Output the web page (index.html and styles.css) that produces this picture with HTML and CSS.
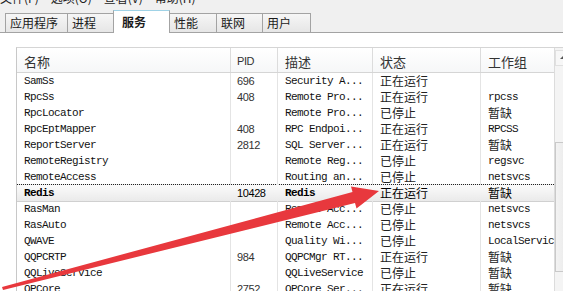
FILE: index.html
```html
<!DOCTYPE html>
<html lang="zh-CN">
<head>
    <meta charset="UTF-8">
    <title>Windows 任务管理器 - 服务</title>
    <link rel="stylesheet" href="styles.css">
</head>
<body>
    <div class="window">
        <div class="menu"><span>文件(F)</span><span>选项(O)</span><span>查看(V)</span><span>帮助(H)</span></div>

        <div class="tabs">
            <div class="tab w62">应用程序</div>
            <div class="tab w46">进程</div>
            <div class="tab active">服务</div>
            <div class="tab w47">性能</div>
            <div class="tab w46">联网</div>
            <div class="tab w49">用户</div>
        </div>

        <div class="panel">
            <div class="list">
                <div class="rows">
                    <div class="row head">
                        <div class="cell cn">名称</div>
                        <div class="cell num">PID</div>
                        <div class="cell cn">描述</div>
                        <div class="cell cn">状态</div>
                        <div class="cell cn">工作组</div>
                    </div>
                    <div id="body"></div>
                </div>
                <div class="scrollbar">
                    <div class="sb-btn up"></div>
                    <div class="sb-track"><div class="sb-thumb"></div></div>
                    <div class="sb-btn down"></div>
                </div>
            </div>
        </div>

        <svg class="arrow" width="563" height="291" viewBox="0 0 563 291">
            <polygon points="379,191 351,186.5 352.5,192 2,287 3,290 355,203 356.5,208.5" fill="#e8383d"/>
        </svg>
    </div>

    <script>
        const services = [
            ['SamSs', '696', 'Security A...', '正在运行', ''],
            ['RpcSs', '408', 'Remote Pro...', '正在运行', 'rpcss'],
            ['RpcLocator', '', 'Remote Pro...', '已停止', '暂缺'],
            ['RpcEptMapper', '408', 'RPC Endpoi...', '正在运行', 'RPCSS'],
            ['ReportServer', '2812', 'SQL Server...', '正在运行', '暂缺'],
            ['RemoteRegistry', '', 'Remote Reg...', '已停止', 'regsvc'],
            ['RemoteAccess', '', 'Routing an...', '已停止', 'netsvcs'],
            ['Redis', '10428', 'Redis', '正在运行', '暂缺'],
            ['RasMan', '', 'Remote Acc...', '已停止', 'netsvcs'],
            ['RasAuto', '', 'Remote Acc...', '已停止', 'netsvcs'],
            ['QWAVE', '', 'Quality Wi...', '已停止', 'LocalServic'],
            ['QQPCRTP', '984', 'QQPCMgr RT...', '正在运行', '暂缺'],
            ['QQLiveService', '', 'QQLiveService', '已停止', '暂缺'],
            ['QPCore', '2752', 'QPCore Ser...', '正在运行', '暂缺']
        ];

        function isChinese(text) {
            return /[\u4e00-\u9fff]/.test(text);
        }

        function renderRows() {
            const body = document.getElementById('body');
            services.forEach(s => {
                const row = document.createElement('div');
                row.className = 'row' + (s[0] === 'Redis' ? ' selected' : '');
                row.innerHTML = `<div class="cell mono">${s[0]}</div>
                                 <div class="cell num">${s[1]}</div>
                                 <div class="cell mono">${s[2]}</div>
                                 <div class="cell cn">${s[3]}</div>
                                 <div class="cell ${isChinese(s[4]) ? 'cn' : 'mono'}">${s[4]}</div>`;
                body.appendChild(row);
            });
        }

        renderRows();
    </script>
</body>
</html>
```

FILE: styles.css
```css
body {
    margin: 0;
    background: #f0f0f0;
    font-family: "Noto Sans CJK SC", sans-serif;
}

.window {
    position: relative;
    width: 563px;
    height: 291px;
    overflow: hidden;
    background: #f0f0f0;
}

.menu {
    display: flex;
    height: 10px;
    overflow: hidden;
    font-size: 12px;
    color: #222;
}

.menu span {
    line-height: 12px;
    margin-top: -8px;
    margin-right: 12px;
}

.tabs {
    display: flex;
    align-items: flex-end;
    height: 22px;
    padding-left: 5px;
}

.tab {
    box-sizing: border-box;
    height: 19px;
    margin-right: -1px;
    border: 1px solid #a3a3a3;
    border-bottom: none;
    background: linear-gradient(#f6f6f6, #e6e6e6);
    font-size: 12px;
    line-height: 18px;
    padding-left: 4px;
    color: #1a1a1a;
}

.w62 { width: 63px; }
.w46 { width: 47px; }
.w47 { width: 48px; }
.w49 { width: 49px; }

.tab.active {
    position: relative;
    z-index: 1;
    width: 57px;
    height: 23px;
    margin-bottom: -1px;
    background: #fff;
    border-color: #a3a3a3;
    border-top: 1px solid #9fd2e6;
    font-weight: bold;
    padding-left: 8px;
    line-height: 21px;
}

.panel {
    height: 259px;
    background: #fff;
    border-top: 1px solid #a3a3a3;
    padding: 14px 0 0 16px;
}

.list {
    display: flex;
    width: 560px;
    height: 260px;
    border-top: 1px solid #d5d5d5;
    border-left: 1px solid #c8c8c8;
}

.rows {
    width: 537px;
}

.row {
    display: grid;
    grid-template-columns: 214px 47px 95px 108px 73px;
    height: 16px;
    box-sizing: border-box;
}

.row.head {
    height: 25px;
    background: linear-gradient(#ffffff, #f6f7f8);
    border-bottom: 1px solid #d5d5d5;
}

.head .cell {
    line-height: 27px;
    font-size: 13px;
    color: #333;
    padding-left: 7px;
    border-right-color: #dcdcdc;
}

.head .num {
    font-size: 11px;
    padding-left: 6px;
}

.cell {
    box-sizing: border-box;
    border-right: 1px solid #e4e4e4;
    white-space: nowrap;
    overflow: hidden;
    line-height: 16px;
    padding-left: 7px;
    color: #111;
}

.cell:last-child {
    border-right: none;
}

.mono {
    font-family: "Liberation Mono", monospace;
    font-size: 11px;
    letter-spacing: -0.6px;
}

.num {
    font-family: "Liberation Sans", sans-serif;
    font-size: 11px;
    letter-spacing: -0.4px;
    padding-left: 6px;
    color: #333;
}

.cn {
    font-size: 12px;
    color: #222;
}

.row.selected {
    height: 18px;
    margin-top: -1px;
    margin-bottom: -1px;
    border-top: 1px dotted #222;
    border-bottom: 1px solid #d0d0d0;
    background: linear-gradient(#fbfbfb, #eaeaea);
}

.row.selected .cell {
    border-right-color: transparent;
    color: #000;
}

.row.selected .mono {
    font-weight: bold;
}

.scrollbar {
    display: flex;
    flex-direction: column;
    width: 17px;
    border-left: 1px solid #dcdcdc;
    background: #f4f4f4;
}

.sb-btn {
    height: 16px;
    box-sizing: border-box;
    border: 1px solid #e0e0e0;
    background: #f7f7f7;
    position: relative;
}

.sb-btn.up {
    margin-top: 2px;
}

.sb-btn::after {
    content: "";
    position: absolute;
    left: 4px;
    top: 5px;
    border-left: 3px solid transparent;
    border-right: 3px solid transparent;
}

.sb-btn.up::after {
    border-bottom: 3px solid #555;
}

.sb-btn.down::after {
    border-top: 3px solid #555;
}

.sb-track {
    flex: 1;
    padding-top: 76px;
    padding-bottom: 4px;
}

.sb-thumb {
    height: 130px;
    box-sizing: border-box;
    border: 1px solid #c9c9c9;
    background: linear-gradient(90deg, #f3f3f3, #e6e6e6);
}

.arrow {
    position: absolute;
    left: 0;
    top: 0;
    pointer-events: none;
}
```
